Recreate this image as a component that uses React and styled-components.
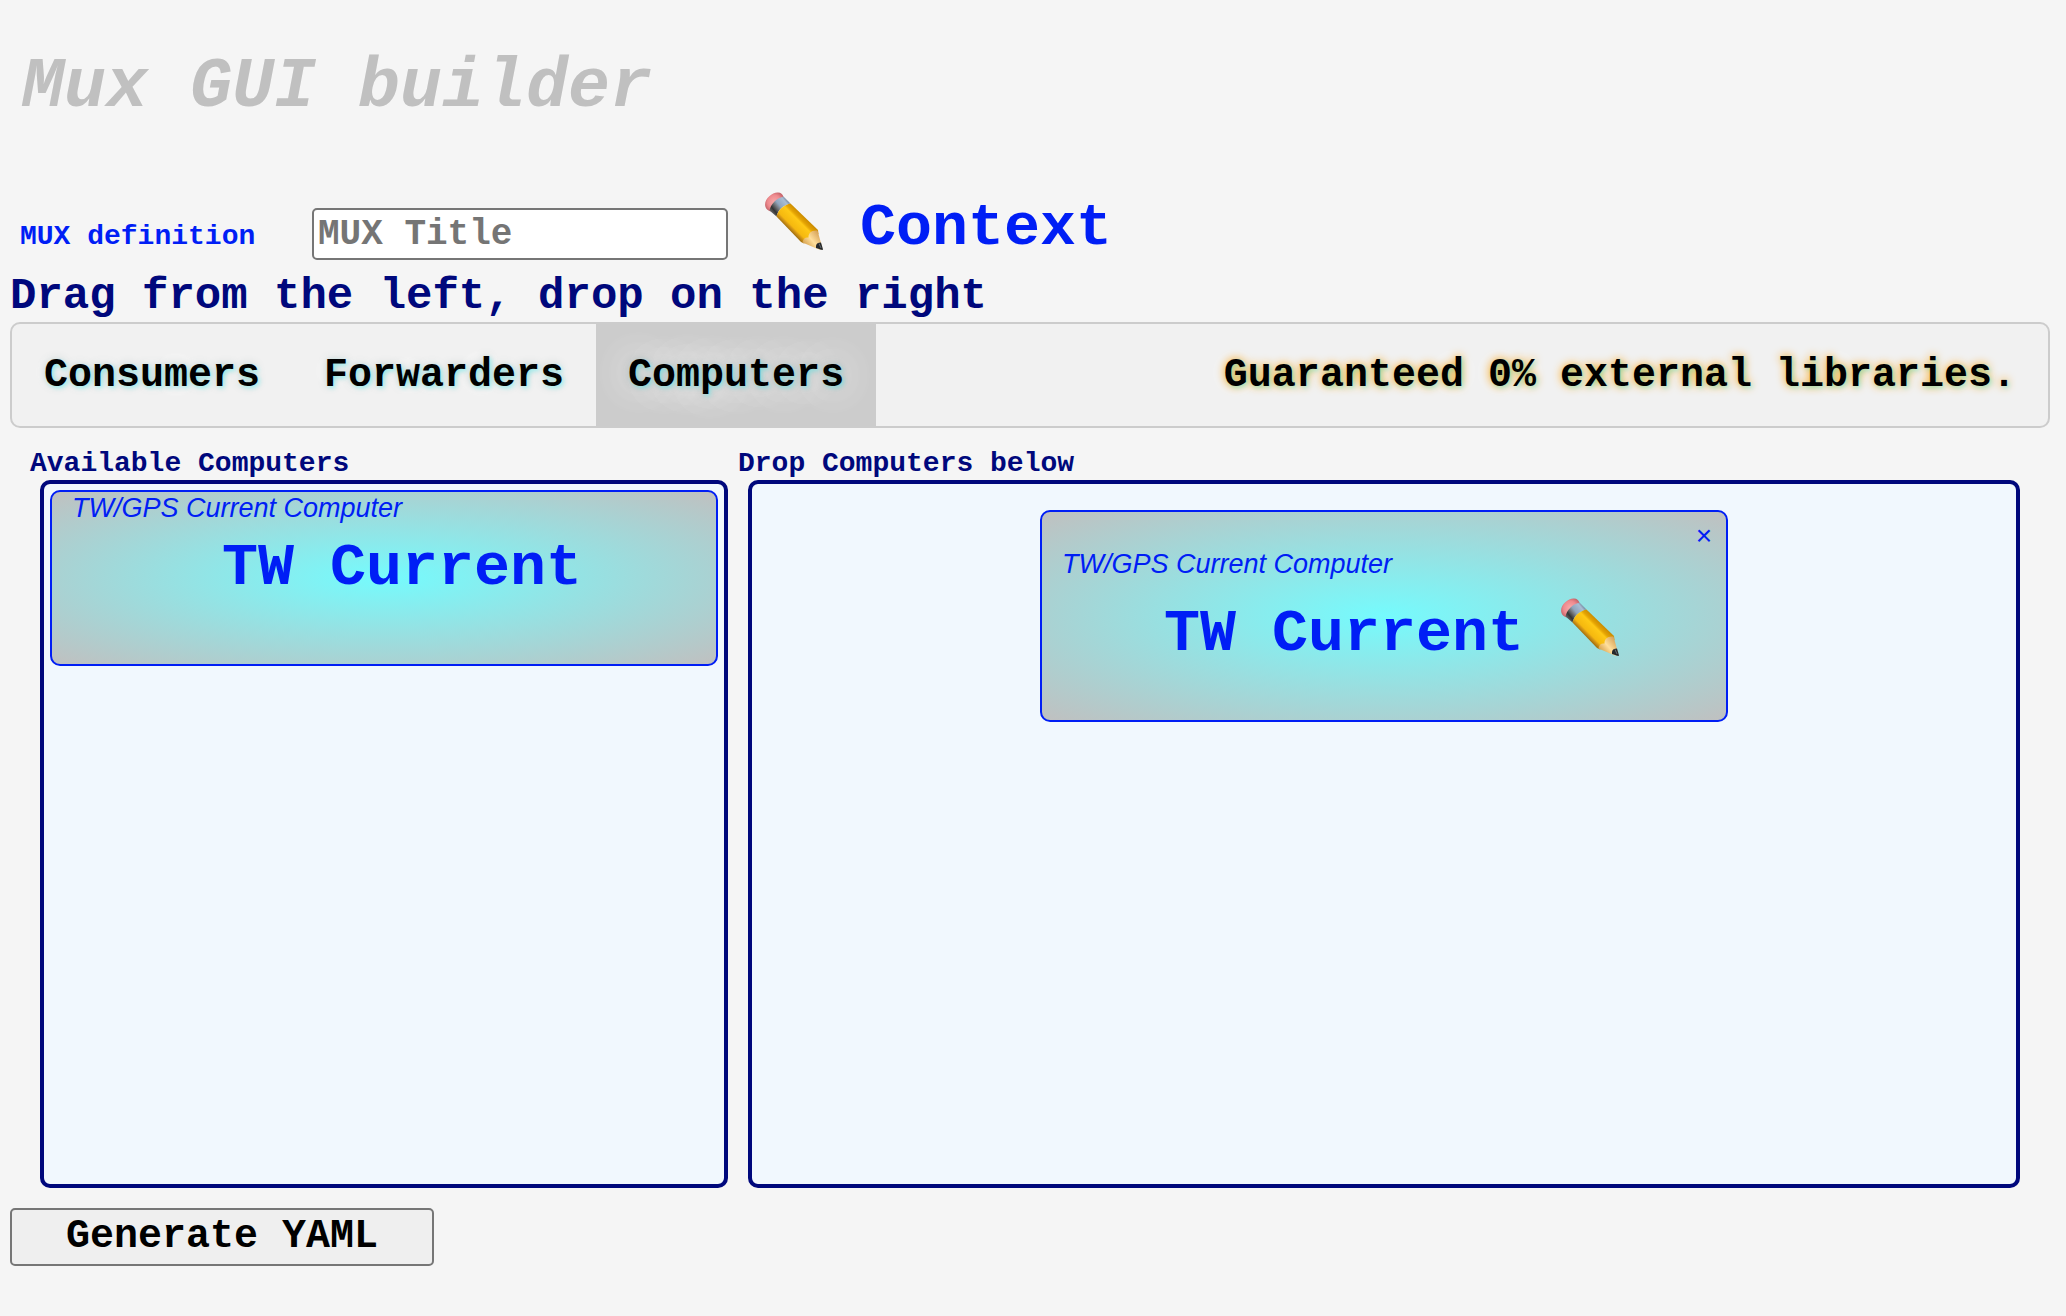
import React, { useId, useState } from "react";
import styled, { createGlobalStyle, css } from "styled-components";

const BLUE = "#001ef5";
const NAVY = "#00087c";
const MONO = '"Liberation Mono", "Courier New", monospace';
const SANS = '"Liberation Sans", Arial, sans-serif';

const GlobalStyle = createGlobalStyle`
  *, *::before, *::after { box-sizing: border-box; }
  body {
    margin: 0;
    background: #f5f5f5;
    font-family: ${MONO};
    font-weight: bold;
  }
`;

const Page = styled.main`
  padding: 48px 16px 48px 10px;
`;

const PageTitle = styled.h1`
  margin: 0 12px 64px;
  color: #c0c0c0;
  font-size: 70px;
  line-height: 80px;
  font-style: italic;
`;

const DefinitionRow = styled.div`
  display: flex;
  align-items: baseline;
  padding-left: 10px;
`;

const DefinitionLabel = styled.label`
  width: 292px;
  color: ${BLUE};
  font-size: 28px;
  line-height: 32px;
`;

const TitleInput = styled.input`
  width: 416px;
  height: 52px;
  margin-right: 36px;
  padding: 4px 4px 2px;
  border: 2px solid #767676;
  border-radius: 5px;
  background: #fff;
  font: bold 36px ${MONO};
  &::placeholder { color: #757575; opacity: 1; }
`;

const EditButton = styled.button`
  width: 80px;
  padding: 0 20px 0 0;
  border: 0;
  background: none;
  font-size: 0;
  line-height: 0;
  cursor: pointer;
`;

const PencilArt = styled.svg`
  width: 60px;
  height: 58px;
  margin-bottom: -6px;
`;

const BigText = styled.span`
  color: ${BLUE};
  font-size: 60px;
  line-height: 68px;
  white-space: nowrap;
`;

const ContextText = styled(BigText)`
  margin-left: 16px;
`;

const Hint = styled.h2`
  margin: 8px 0 0;
  color: ${NAVY};
  font-size: 44px;
  line-height: 52px;
`;

const TabBar = styled.nav`
  display: flex;
  overflow: hidden;
  border: 2px solid #ccc;
  border-radius: 10px;
  background: #f1f1f1;
`;

const barText = css`
  padding: 29px 32px 27px;
  color: #000;
  font: bold 40px/46px ${MONO};
  white-space: nowrap;
`;

const Tab = styled.button`
  ${barText}
  border: 0;
  background: ${(p) => (p.$active ? "#ccc" : "transparent")};
  text-shadow: 2px 2px 4px #00ffff50, 0 0 8px #5f7f8050, 0 0 40px #fff, 0 0 40px #fff;
  cursor: pointer;
`;

const Slogan = styled.span`
  ${barText}
  margin-left: auto;
  text-shadow: 2px 2px 4px #00ffff50, 0 0 10px #ff9d00, 0 0 40px #fff;
`;

const Columns = styled.div`
  display: grid;
  grid-template-columns: 177fr 323fr;
  margin: 20px 20px 0;
`;

const ColumnTitle = styled.h3`
  margin: 0;
  color: ${NAVY};
  font-size: 28px;
  line-height: 32px;
`;

const DropArea = styled.div`
  min-height: 708px;
  margin: 0 10px;
  padding: ${(p) => p.$inset}px 6px;
  border: 4px solid ${NAVY};
  border-radius: 10px;
  background: #f1f8fe;
`;

const Card = styled.article`
  width: ${(p) => (p.$dropped ? "688px" : "100%")};
  max-width: 100%;
  min-height: ${(p) => (p.$dropped ? 212 : 176)}px;
  margin: 0 auto;
  border: 2px solid ${BLUE};
  border-radius: 10px;
  background: radial-gradient(#75fbfd, #c0c0c0);
  color: ${BLUE};
`;

const CardBar = styled.div`
  display: flex;
  justify-content: flex-end;
  height: 36px;
  padding: 8px 14px 0;
`;

const CloseButton = styled.button`
  padding: 0;
  border: 0;
  background: none;
  color: ${BLUE};
  font: normal 28px/32px ${SANS};
  cursor: pointer;
`;

const CardKind = styled.div`
  padding: 0 20px;
  font: italic normal 27px/32px ${SANS};
`;

const CardName = styled.div`
  display: flex;
  align-items: baseline;
  justify-content: center;
  gap: 36px;
  margin-top: ${(p) => (p.$dropped ? 18 : 10)}px;
  padding-left: 36px;
`;

const GenerateButton = styled.button`
  width: 424px;
  height: 58px;
  margin-top: 20px;
  border: 2px solid #767676;
  border-radius: 5px;
  background: #efefef;
  color: #000;
  font: bold 40px/46px ${MONO};
  cursor: pointer;
`;

function Pencil() {
  const id = useId();
  return (
    <PencilArt viewBox="0 0 60 58" aria-hidden="true">
      <defs>
        <linearGradient id={id + "y"} gradientUnits="userSpaceOnUse" x1="24" y1="36" x2="38" y2="22">
          <stop offset="0" stopColor="#a87410" />
          <stop offset="0.14" stopColor="#d99a14" />
          <stop offset="0.22" stopColor="#f5b80f" />
          <stop offset="0.64" stopColor="#ffc916" />
          <stop offset="0.76" stopColor="#e5a404" />
          <stop offset="1" stopColor="#c98a00" />
        </linearGradient>
        <linearGradient id={id + "m"} gradientUnits="userSpaceOnUse" x1="7" y1="22" x2="24" y2="8">
          <stop offset="0" stopColor="#777" />
          <stop offset="0.22" stopColor="#333" />
          <stop offset="0.42" stopColor="#777b80" />
          <stop offset="0.55" stopColor="#8fa5bd" />
          <stop offset="0.85" stopColor="#a9bdd3" />
          <stop offset="1" stopColor="#6f8299" />
        </linearGradient>
        <radialGradient id={id + "e"} cx="0.5" cy="0.5" r="0.6">
          <stop offset="0" stopColor="#f8aaaa" />
          <stop offset="0.6" stopColor="#ee8a8e" />
          <stop offset="1" stopColor="#bd5b62" />
        </radialGradient>
        <linearGradient id={id + "w"} gradientUnits="userSpaceOnUse" x1="42" y1="53" x2="55" y2="42">
          <stop offset="0" stopColor="#dba856" />
          <stop offset="0.45" stopColor="#ffdf9c" />
          <stop offset="1" stopColor="#d9a65c" />
        </linearGradient>
      </defs>
      <path d="M1.500 15C-1 8 8 0 14 0.500C17 0.700 18.500 2 19.500 5L6.500 19.500C3.500 18 2 17 1.500 15Z" fill={`url(#${id}e)`} />
      <path d="M5.500 18.500C7 12 12 6.500 19.500 4.500L26.500 11.500C19 13.500 14 18 12.500 24.500Z" fill={`url(#${id}m)`} />
      <path d="M12.500 24.500C14 18 19 13.500 26.500 11.500L54 38L54.500 42L40 51.500L37 50Z" fill={`url(#${id}y)`} />
      <path d="M38.500 50.500C39 47 41 45 44.500 45.500C44.500 41 47 38 53.500 38.500L58.500 56.500L56 58Z" fill={`url(#${id}w)`} />
      <path d="M52 53.500C52.500 51.500 54 50.500 57 50.500L59 57.500C58.500 58.300 57.500 58 52 56Z" fill="#25282b" />
      <path d="M55 51.500L57 56" stroke="#666c70" strokeWidth="1" />
    </PencilArt>
  );
}

const TABS = ["Consumers", "Forwarders", "Computers"];

export default function App() {
  const [tab, setTab] = useState("Computers");
  return (
    <>
      <GlobalStyle />
      <Page>
        <PageTitle>Mux GUI builder</PageTitle>
        <DefinitionRow>
          <DefinitionLabel htmlFor="mux-title">MUX definition</DefinitionLabel>
          <TitleInput id="mux-title" type="text" placeholder="MUX Title" />
          <EditButton type="button" aria-label="Edit context">
            <Pencil />
          </EditButton>
          <ContextText>Context</ContextText>
        </DefinitionRow>
        <Hint>Drag from the left, drop on the right</Hint>
        <TabBar>
          {TABS.map((name) => (
            <Tab key={name} type="button" $active={name === tab} onClick={() => setTab(name)}>
              {name}
            </Tab>
          ))}
          <Slogan>Guaranteed 0% external libraries.</Slogan>
        </TabBar>
        <Columns>
          <section>
            <ColumnTitle>Available Computers</ColumnTitle>
            <DropArea $inset={6}>
              <Card draggable>
                <CardKind>TW/GPS Current Computer</CardKind>
                <CardName>
                  <BigText>TW Current</BigText>
                </CardName>
              </Card>
            </DropArea>
          </section>
          <section>
            <ColumnTitle>Drop Computers below</ColumnTitle>
            <DropArea $inset={26}>
              <Card $dropped>
                <CardBar>
                  <CloseButton type="button" aria-label="Remove">×</CloseButton>
                </CardBar>
                <CardKind>TW/GPS Current Computer</CardKind>
                <CardName $dropped>
                  <BigText>TW Current</BigText>
                  <EditButton type="button" aria-label="Edit TW Current">
                    <Pencil />
                  </EditButton>
                </CardName>
              </Card>
            </DropArea>
          </section>
        </Columns>
        <GenerateButton type="button">Generate YAML</GenerateButton>
      </Page>
    </>
  );
}
